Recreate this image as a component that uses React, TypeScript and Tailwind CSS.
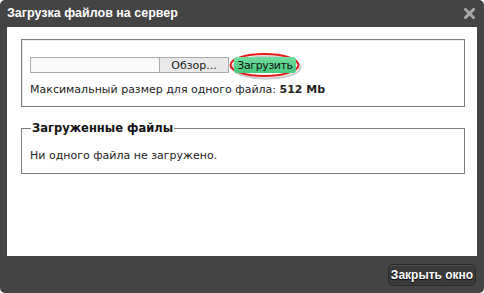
import React from 'react'

const font = { fontFamily: '"DejaVu Sans", Verdana, sans-serif' }
const tahoma = { fontFamily: '"Liberation Sans", Tahoma, Arial, sans-serif' }

export default function App() {
  return (
    <div className="w-[484px] h-[293px] bg-[#444444] rounded-[5px] flex flex-col relative" style={font}>
      {/* Header */}
      <div className="h-[27px] px-[7px] flex items-center">
        <span className="text-white font-bold text-[12.5px] leading-none" style={tahoma}>
          Загрузка файлов на сервер
        </span>
      </div>
      <button className="absolute top-[7px] right-[9px] w-[12px] h-[12px] flex items-center justify-center">
        <svg width="11" height="11" viewBox="0 0 11 11">
          <path d="M1.5 1.5 L9.5 9.5 M9.5 1.5 L1.5 9.5" stroke="#a8a8a8" strokeWidth="3" strokeLinecap="square" />
        </svg>
      </button>

      {/* Content panel */}
      <div className="mx-[7px] h-[229px] bg-white pl-[14px] pr-[12px] pt-[12px] text-[11px] text-[#222]">
        <div className="h-[68px] border border-[#7d7d7d] shadow-[inset_1px_1px_0_#ececec] pl-[8px] pt-[17px]">
          <div className="flex items-center h-[16px]">
            <div className="w-[130px] h-[16px] border border-[#ababab] bg-[#f9f9f9]" />
            <div className="w-[69px] h-[16px] border border-[#ababab] border-l-0 bg-[#e9e9e9] flex items-center justify-center leading-none">
              Обзор...
            </div>
            <div className="relative ml-[5px]">
              <svg className="absolute -left-[5px] -top-[5px]" width="73" height="28" viewBox="0 0 73 28">
                <ellipse cx="37.5" cy="15.5" rx="34" ry="11" fill="none" stroke="#cccccc" strokeWidth="2" />
                <ellipse cx="35.5" cy="13" rx="34" ry="11" fill="none" stroke="#e41b1b" strokeWidth="2" />
              </svg>
              <div className="relative w-[62px] h-[16px] rounded-[3px] bg-gradient-to-b from-[#72de9f] to-[#45c97b] flex items-center justify-center leading-none text-[#111] tracking-[-0.4px] whitespace-nowrap">
                Загрузить
              </div>
            </div>
          </div>
          <div className="mt-[11px] leading-none">
            Максимальный размер для одного файла: <b>512 Mb</b>
          </div>
        </div>

        <fieldset className="mt-[14px] h-[53px] border border-[#7d7d7d]">
          <legend className="ml-[9px] px-[1px] font-bold text-[11.5px] leading-[15px] text-[#111]">
            Загруженные файлы
          </legend>
          <div className="mt-[14px] pl-[8px] leading-none">Ни одного файла не загружено.</div>
        </fieldset>
      </div>

      {/* Footer */}
      <div className="flex justify-end pr-[8px] pt-[8px]">
        <button
          className="w-[88px] h-[22px] rounded-[5px] bg-[#3a3a3a] border border-[#2b2b2b] shadow-[inset_0_1px_0_#505050] text-white font-bold text-[12px] leading-none whitespace-nowrap [text-shadow:0_1px_1px_#000]"
          style={tahoma}
        >
          Закрыть окно
        </button>
      </div>
    </div>
  )
}
